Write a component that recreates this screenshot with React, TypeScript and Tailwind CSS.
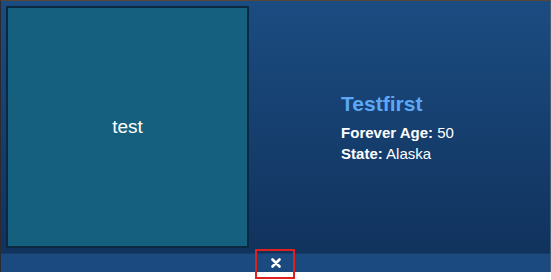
export default function App() {
  return (
    <div className="relative w-[551px] h-[280px] bg-white overflow-hidden" style={{ fontFamily: '"Liberation Sans", Arial, sans-serif' }}>
      <div className="h-[272px] flex flex-col border-t border-t-[#5b4636] border-l border-l-[#2a2a30] border-r border-r-[#4a5a70] bg-gradient-to-b from-[#1b4c81] to-[#10315b]">
        <div className="flex flex-1">
          <div className="ml-[5px] mt-[5px] w-[243px] h-[242px] border-2 border-[#0a2840] bg-[#16607f] flex items-center justify-center">
            <span className="text-[19px] text-white">test</span>
          </div>
          <div className="flex-1 flex items-center justify-center">
            <div className="pr-[4px] pt-[2px] text-white">
              <div className="text-[21px] font-bold text-[#5ca8f7] leading-[24px]">Testfirst</div>
              <div className="mt-[6px] text-[15px] leading-[21px]">
                <span className="font-bold">Forever Age:</span> 50
              </div>
              <div className="text-[15px] leading-[21px]">
                <span className="font-bold">State:</span> Alaska
              </div>
            </div>
          </div>
        </div>
        <div className="h-[19px] bg-[#1b4a80] border-t border-t-[#163d6a] flex items-center justify-center">
          <svg width="10" height="10" viewBox="0 0 10 10">
            <path d="M1.5 1.5 L8.5 8.5 M8.5 1.5 L1.5 8.5" stroke="white" strokeWidth="2.6" strokeLinecap="round" />
          </svg>
        </div>
      </div>
      <div className="absolute left-[255px] top-[249px] w-[40px] h-[30px] border-2 border-[#e0201c]" />
    </div>
  );
}
